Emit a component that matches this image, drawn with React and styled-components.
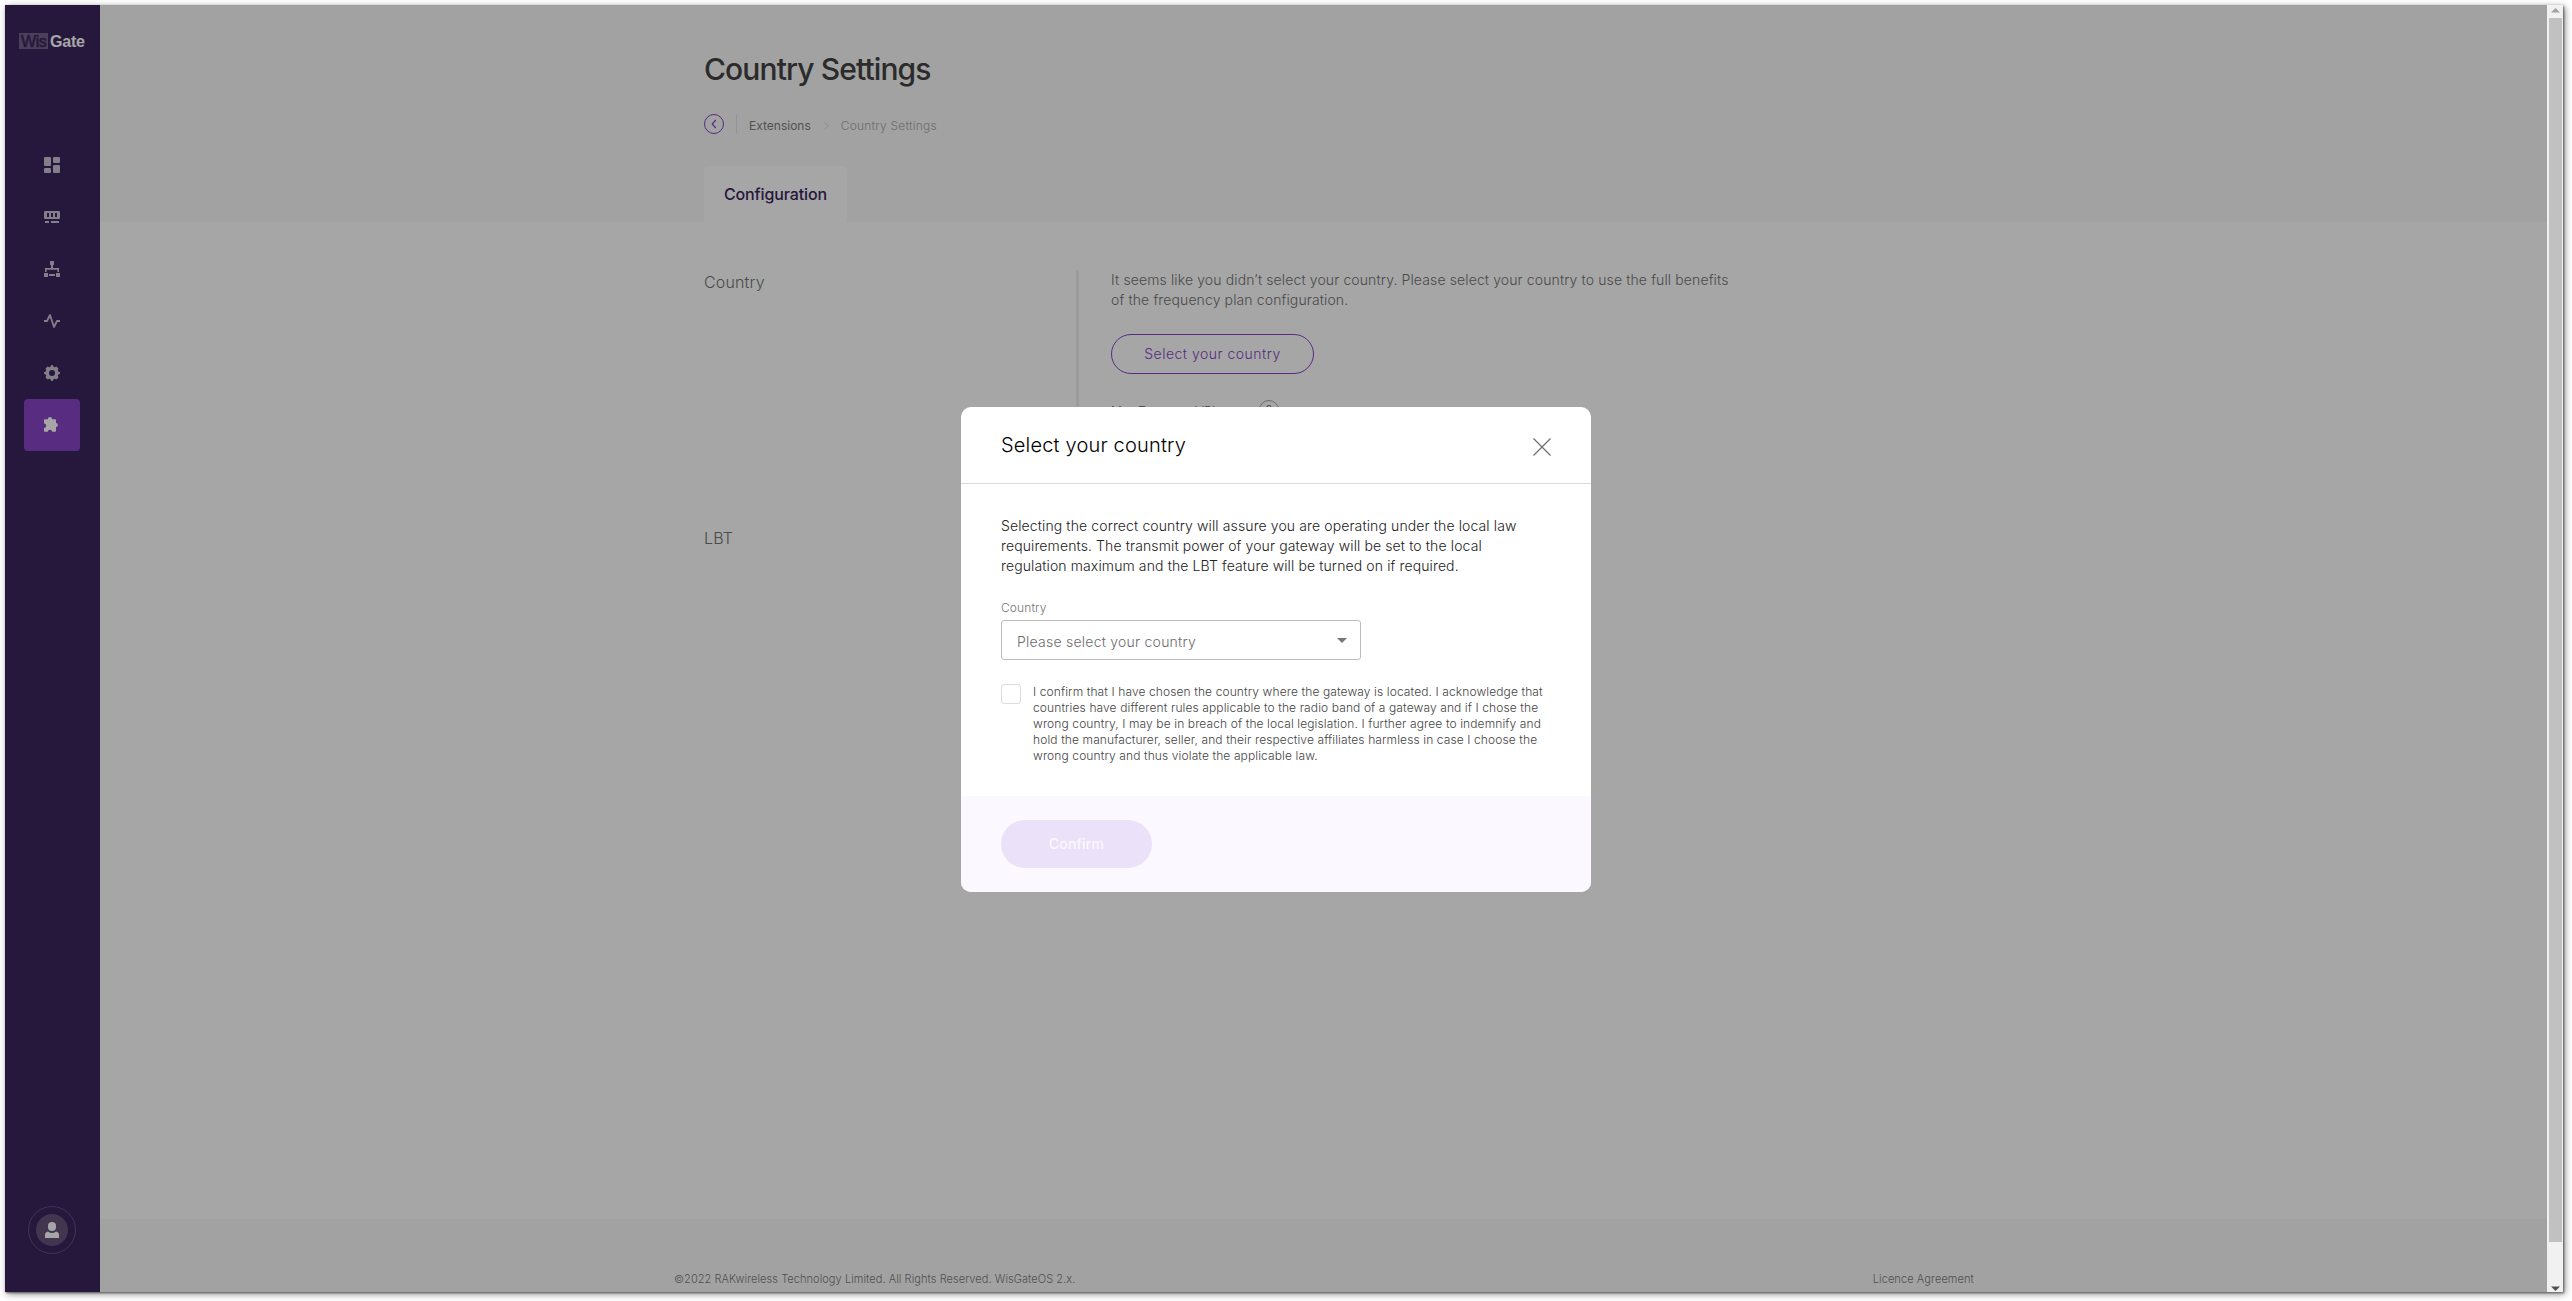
import React from 'react';
import styled, { createGlobalStyle } from 'styled-components';

const GlobalStyle = createGlobalStyle`
  *, *::before, *::after { box-sizing: border-box; }
  body {
    margin: 0;
    background: #fff;
    font-family: Inter, "Liberation Sans", sans-serif;
    overflow: hidden;
  }
  h1, h2, p { margin: 0; font-weight: 400; }
  button { font-family: inherit; cursor: pointer; }
`;

const Desk = styled.div`
  width: 2572px;
  height: 1301px;
  padding: 5px 9px 9px 5px;
`;

const Frame = styled.div`
  display: flex;
  width: 2558px;
  height: 1287px;
  box-shadow: 1px 1px 2px rgba(0, 0, 0, 0.5), 2px 2px 7px rgba(0, 0, 0, 0.45);
`;

const Viewport = styled.div`
  position: relative;
  flex: 1;
  display: flex;
  background: #fff;
`;

const Sidebar = styled.nav`
  width: 95px;
  display: flex;
  flex-direction: column;
  align-items: center;
  background: #3b255c;
  padding: 28px 1px 38px 0;
`;

const Logo = styled.div`
  display: flex;
  align-items: center;
  align-self: flex-start;
  margin-left: 14px;
  height: 16px;
  gap: 2px;
  font: 700 16px/17px "Liberation Sans", Arial, sans-serif;
  letter-spacing: -0.2px;
  color: #fff;
`;

const LogoBadge = styled.span`
  width: 29px;
  height: 16px;
  padding-left: 2px;
  background: #736189;
  color: #3b255c;
  font-weight: 400;
  letter-spacing: -0.4px;
  -webkit-text-stroke: 0.6px #3b255c;
`;

const Nav = styled.div`
  display: flex;
  flex-direction: column;
  margin-top: 90px;
`;

const NavItem = styled.a`
  display: flex;
  align-items: center;
  justify-content: center;
  width: 56px;
  height: 52px;
  border-radius: 4px;
  background: ${(p) => (p.$active ? '#8744c6' : 'transparent')};
  color: ${(p) => (p.$active ? '#fff' : '#c9c2d1')};
`;

const Avatar = styled.div`
  display: flex;
  align-items: center;
  justify-content: center;
  width: 48px;
  height: 48px;
  margin-top: auto;
  border: 1px solid #62507c;
  border-radius: 50%;
`;

const AvatarDisc = styled.div`
  display: flex;
  align-items: center;
  justify-content: center;
  width: 32px;
  height: 32px;
  border-radius: 50%;
  background: #66527a;
  color: #fff;
`;

const Main = styled.main`
  flex: 1;
  display: flex;
  flex-direction: column;
`;

const PageHeader = styled.header`
  height: 217px;
  padding: 48px 0 0 604px;
  background: #f9f9f9;
  display: flex;
  flex-direction: column;
  align-items: flex-start;
`;

const PageTitle = styled.h1`
  font-size: 30px;
  line-height: 32px;
  font-weight: 500;
  letter-spacing: -0.88px;
  color: #424242;
`;

const Breadcrumb = styled.div`
  display: flex;
  align-items: center;
  height: 20px;
  margin-top: 29px;
  font-size: 12px;
  line-height: 20px;
`;

const CrumbRule = styled.span`
  width: 1px;
  height: 20px;
  margin: 0 12px;
  background: #e6e1ee;
`;

const Crumb = styled.span`
  padding-top: 4px;
  font-weight: ${(p) => (p.$current ? 300 : 400)};
  letter-spacing: ${(p) => p.$track};
  color: ${(p) => (p.$current ? '#a8a8a8' : '#808080')};
`;

const CrumbArrow = styled.svg`
  margin: 4px 12px 0 13px;
`;

const Tab = styled.div`
  display: flex;
  align-items: center;
  justify-content: center;
  width: 143px;
  height: 56px;
  margin-top: auto;
  border-radius: 4px;
  background: #fff;
  font-size: 16px;
  font-weight: 500;
  letter-spacing: -0.12px;
  color: #3b255c;
`;

const Content = styled.section`
  flex: 1;
  display: flex;
  flex-direction: column;
  padding: 48px 0 0 604px;
`;

const Row = styled.div`
  display: flex;
  height: ${(p) => p.$height};
`;

const RowTitle = styled.h2`
  width: 372px;
  padding-top: 2px;
  font-size: 16px;
  line-height: 20px;
  font-weight: 300;
  letter-spacing: 0.15px;
  color: #737373;
`;

const RowBody = styled.div`
  width: 670px;
  border-left: 3px solid #f0f0f0;
  padding-left: 32px;
`;

const Hint = styled.p`
  font-size: 14px;
  line-height: 20px;
  font-weight: 300;
  letter-spacing: 0.12px;
  color: #737373;
  white-space: nowrap;
`;

const OutlineButton = styled.button`
  display: block;
  width: 203px;
  height: 40px;
  margin-top: 24px;
  padding: 0 0 1px;
  border: 1px solid #8744c6;
  border-radius: 20px;
  background: transparent;
  font-size: 14px;
  font-weight: 300;
  letter-spacing: 0.5px;
  color: #8744c6;
`;

const FieldLabel = styled.div`
  display: flex;
  align-items: center;
  margin-top: 24px;
  font-size: 12px;
  line-height: 20px;
  font-weight: 300;
  color: #666;
`;

const LabelText = styled.span`
  width: 148px;
  padding-top: 3px;
`;

const Help = styled.span`
  display: flex;
  align-items: center;
  justify-content: center;
  width: 20px;
  height: 20px;
  border: 1px solid #a8a8a8;
  border-radius: 50%;
  font-size: 11px;
`;

const Footer = styled.footer`
  display: flex;
  justify-content: space-between;
  height: 73px;
  padding: 52px 573px 0 574px;
  background: #f9f9f9;
  font-size: 11px;
  line-height: 16px;
  font-weight: 300;
  color: #7c7c7c;
`;

const FootText = styled.span`
  letter-spacing: ${(p) => p.$track};
`;

const Overlay = styled.div`
  position: absolute;
  inset: 0;
  display: flex;
  align-items: flex-start;
  justify-content: center;
  padding-top: 402px;
  background: rgba(0, 0, 0, 0.35);
`;

const Dialog = styled.div`
  display: flex;
  flex-direction: column;
  width: 630px;
  height: 485px;
  border-radius: 10px;
  background: #fff;
  overflow: hidden;
`;

const DialogHeader = styled.div`
  display: flex;
  align-items: center;
  justify-content: space-between;
  height: 77px;
  padding: 0 40px;
  border-bottom: 1px solid #dcdcdc;
`;

const DialogTitle = styled.h2`
  font-size: 20px;
  line-height: 28px;
  font-weight: 300;
  letter-spacing: 0.18px;
  color: #000;
`;

const CloseButton = styled.button`
  display: flex;
  padding: 3px 0 0;
  border: 0;
  background: none;
  color: #6e6e6e;
`;

const DialogBody = styled.div`
  flex: 1;
  padding: 32px 40px 0;
`;

const Lead = styled.p`
  font-size: 14px;
  line-height: 20px;
  font-weight: 300;
  letter-spacing: 0.115px;
  color: #222;
  white-space: nowrap;
`;

const SelectLabel = styled.div`
  margin-top: 24px;
  font-size: 12px;
  line-height: 16px;
  font-weight: 300;
  letter-spacing: 0.1px;
  color: #737373;
`;

const Select = styled.div`
  display: flex;
  align-items: center;
  justify-content: space-between;
  width: 360px;
  height: 40px;
  margin-top: 4px;
  padding: 2px 13px 0 15px;
  border: 1px solid #bcbcbc;
  border-radius: 3px;
  font-size: 14px;
  font-weight: 300;
  letter-spacing: 0.24px;
  color: #6c6c6c;
`;

const Caret = styled.span`
  width: 0;
  height: 0;
  margin-top: -2px;
  border: 5px solid transparent;
  border-top-color: #757575;
  border-bottom-width: 0;
`;

const Consent = styled.label`
  display: flex;
  gap: 12px;
  margin-top: 24px;
`;

const Checkbox = styled.span`
  width: 20px;
  height: 20px;
  border: 1px solid #dcdcdc;
  border-radius: 3px;
`;

const ConsentText = styled.span`
  font-size: 12px;
  line-height: 16px;
  font-weight: 300;
  letter-spacing: 0.11px;
  color: #444;
  white-space: nowrap;
`;

const DialogFooter = styled.div`
  height: 96px;
  padding: 24px 40px;
  background: #fbf9ff;
`;

const ConfirmButton = styled.button`
  width: 151px;
  height: 48px;
  padding: 0 0 1px;
  border: 0;
  border-radius: 24px;
  background: #ebe1f9;
  font-size: 14px;
  font-weight: 500;
  letter-spacing: 0.2px;
  color: #fbf9ff;
`;

const Scrollbar = styled.div`
  display: flex;
  flex-direction: column;
  align-items: center;
  width: 16px;
  padding: 3px 0 1px;
  background: #f1f1f1;
`;

const ScrollThumb = styled.div`
  width: 13px;
  height: 1224px;
  margin: 5px 0 auto 1px;
  background: #c1c1c1;
`;

const icons = {
  dashboard: (
    <>
      <rect x="0" y="0" width="7" height="9" rx="1" />
      <rect x="9" y="0" width="7" height="6" rx="1" />
      <rect x="0" y="11" width="7" height="5" rx="1" />
      <rect x="9" y="8" width="7" height="8" rx="1" />
    </>
  ),
  gateway: (
    <path
      fillRule="evenodd"
      d="M1 2H15Q16 2 16 3V9Q16 10 15 10H1Q0 10 0 9V3Q0 2 1 2ZM3 4V8H5V4ZM7 4V8H9V4ZM11 4V8H13V4ZM1 12H5V14H1ZM7 12H15V14H7Z"
    />
  ),
  network: (
    <path d="M6 0H10V4H9V7H15V11H13.4V8.7H2.6V11H1V7H7V4H6ZM0 12H4V16H0ZM12 12H16V16H12ZM5 13H11V15H5Z" />
  ),
  activity: (
    <path d="M0 8H3L6 2L10 14L13 8H16" fill="none" stroke="currentColor" strokeWidth="1.8" strokeLinejoin="round" />
  ),
  settings: (
    <path
      fillRule="evenodd"
      d="M6.5 1.7L7.2 0H8.8L9.5 1.7L10.7 2.2L12.4 1.5L14.5 3.6L13.8 5.3L14.3 6.5L16 7.2V8.8L14.3 9.5L13.8 10.7L14.5 12.4L12.4 14.5L10.7 13.8L9.5 14.3L8.8 16H7.2L6.5 14.3L5.3 13.8L3.6 14.5L1.5 12.4L2.2 10.7L1.7 9.5L0 8.8V7.2L1.7 6.5L2.2 5.3L1.5 3.6L3.6 1.5L5.3 2.2ZM8 5A3 3 0 1 0 8 11A3 3 0 1 0 8 5Z"
    />
  ),
  extension: (
    <path d="M0.8 2.2H3.9A2.1 2.1 0 0 1 8.1 2.2H11.2Q12 2.2 12 3V6.1A1.9 1.9 0 0 1 12 9.9V14Q12 14.8 11.2 14.8H8.1A2.1 2.1 0 0 0 3.9 14.8H0.8Q0 14.8 0 14V11A2.1 2.1 0 0 0 0 6.6V3Q0 2.2 0.8 2.2Z" />
  ),
};

const menu = ['dashboard', 'gateway', 'network', 'activity', 'settings', 'extension'];

export default function App() {
  return (
    <>
      <GlobalStyle />
      <Desk>
        <Frame>
          <Viewport>
            <Sidebar>
              <Logo>
                <LogoBadge>Wis</LogoBadge>
                <span>Gate</span>
              </Logo>
              <Nav>
                {menu.map((name) => (
                  <NavItem key={name} $active={name === 'extension'}>
                    <svg width="16" height="16" viewBox="0 0 16 16" fill="currentColor">
                      {icons[name]}
                    </svg>
                  </NavItem>
                ))}
              </Nav>
              <Avatar>
                <AvatarDisc>
                  <svg width="14" height="16" viewBox="0 0 14 16" fill="currentColor">
                    <rect x="3" y="0" width="8" height="9" rx="4" />
                    <path d="M3 9.6Q7 12.6 11 9.6Q14 10.4 14 13V16H0V13Q0 10.4 3 9.6Z" />
                  </svg>
                </AvatarDisc>
              </Avatar>
            </Sidebar>
            <Main>
              <PageHeader>
                <PageTitle>Country Settings</PageTitle>
                <Breadcrumb>
                  <svg width="20" height="20" viewBox="0 0 20 20" fill="none" stroke="#8744c6">
                    <circle cx="10" cy="10" r="9.5" />
                    <path d="M11.8 6L8.2 10L11.8 14" strokeWidth="1.2" />
                  </svg>
                  <CrumbRule />
                  <Crumb $track="0">Extensions</Crumb>
                  <CrumbArrow width="5" height="8" viewBox="0 0 5 8" fill="none" stroke="#dcd6e4">
                    <path d="M0.5 0.5L4.3 4L0.5 7.5" />
                  </CrumbArrow>
                  <Crumb $current $track="0.2px">Country Settings</Crumb>
                </Breadcrumb>
                <Tab>Configuration</Tab>
              </PageHeader>
              <Content>
                <Row $height="256px">
                  <RowTitle>Country</RowTitle>
                  <RowBody>
                    <Hint>
                      It seems like you didn’t select your country. Please select your country to use the full benefits
                      <br />
                      of the frequency plan configuration.
                    </Hint>
                    <OutlineButton>Select your country</OutlineButton>
                    <FieldLabel>
                      <LabelText>Max Tx power (dB)</LabelText>
                      <Help>?</Help>
                    </FieldLabel>
                  </RowBody>
                </Row>
                <Row $height="100px">
                  <RowTitle>LBT</RowTitle>
                  <RowBody />
                </Row>
              </Content>
              <Footer>
                <FootText $track="0.06px">
                  ©2022 RAKwireless Technology Limited. All Rights Reserved. WisGateOS 2.x.
                </FootText>
                <FootText $track="0.1px">Licence Agreement</FootText>
              </Footer>
            </Main>
            <Overlay>
              <Dialog>
                <DialogHeader>
                  <DialogTitle>Select your country</DialogTitle>
                  <CloseButton aria-label="Close">
                    <svg width="18" height="18" viewBox="0 0 18 18" stroke="currentColor" strokeWidth="1.2">
                      <path d="M0.5 0.5L17.5 17.5M17.5 0.5L0.5 17.5" />
                    </svg>
                  </CloseButton>
                </DialogHeader>
                <DialogBody>
                  <Lead>
                    Selecting the correct country will assure you are operating under the local law
                    <br />
                    requirements. The transmit power of your gateway will be set to the local
                    <br />
                    regulation maximum and the LBT feature will be turned on if required.
                  </Lead>
                  <SelectLabel>Country</SelectLabel>
                  <Select>
                    Please select your country
                    <Caret />
                  </Select>
                  <Consent>
                    <Checkbox />
                    <ConsentText>
                      I confirm that I have chosen the country where the gateway is located. I acknowledge that
                      <br />
                      countries have different rules applicable to the radio band of a gateway and if I chose the
                      <br />
                      wrong country, I may be in breach of the local legislation. I further agree to indemnify and
                      <br />
                      hold the manufacturer, seller, and their respective affiliates harmless in case I choose the
                      <br />
                      wrong country and thus violate the applicable law.
                    </ConsentText>
                  </Consent>
                </DialogBody>
                <DialogFooter>
                  <ConfirmButton>Confirm</ConfirmButton>
                </DialogFooter>
              </Dialog>
            </Overlay>
          </Viewport>
          <Scrollbar>
            <svg width="9" height="5" viewBox="0 0 9 5">
              <path d="M4.5 0L9 4.5H0Z" fill="#a3a3a3" />
            </svg>
            <ScrollThumb />
            <svg width="9" height="5" viewBox="0 0 9 5">
              <path d="M0 0.5H9L4.5 5Z" fill="#505050" />
            </svg>
          </Scrollbar>
        </Frame>
      </Desk>
    </>
  );
}
